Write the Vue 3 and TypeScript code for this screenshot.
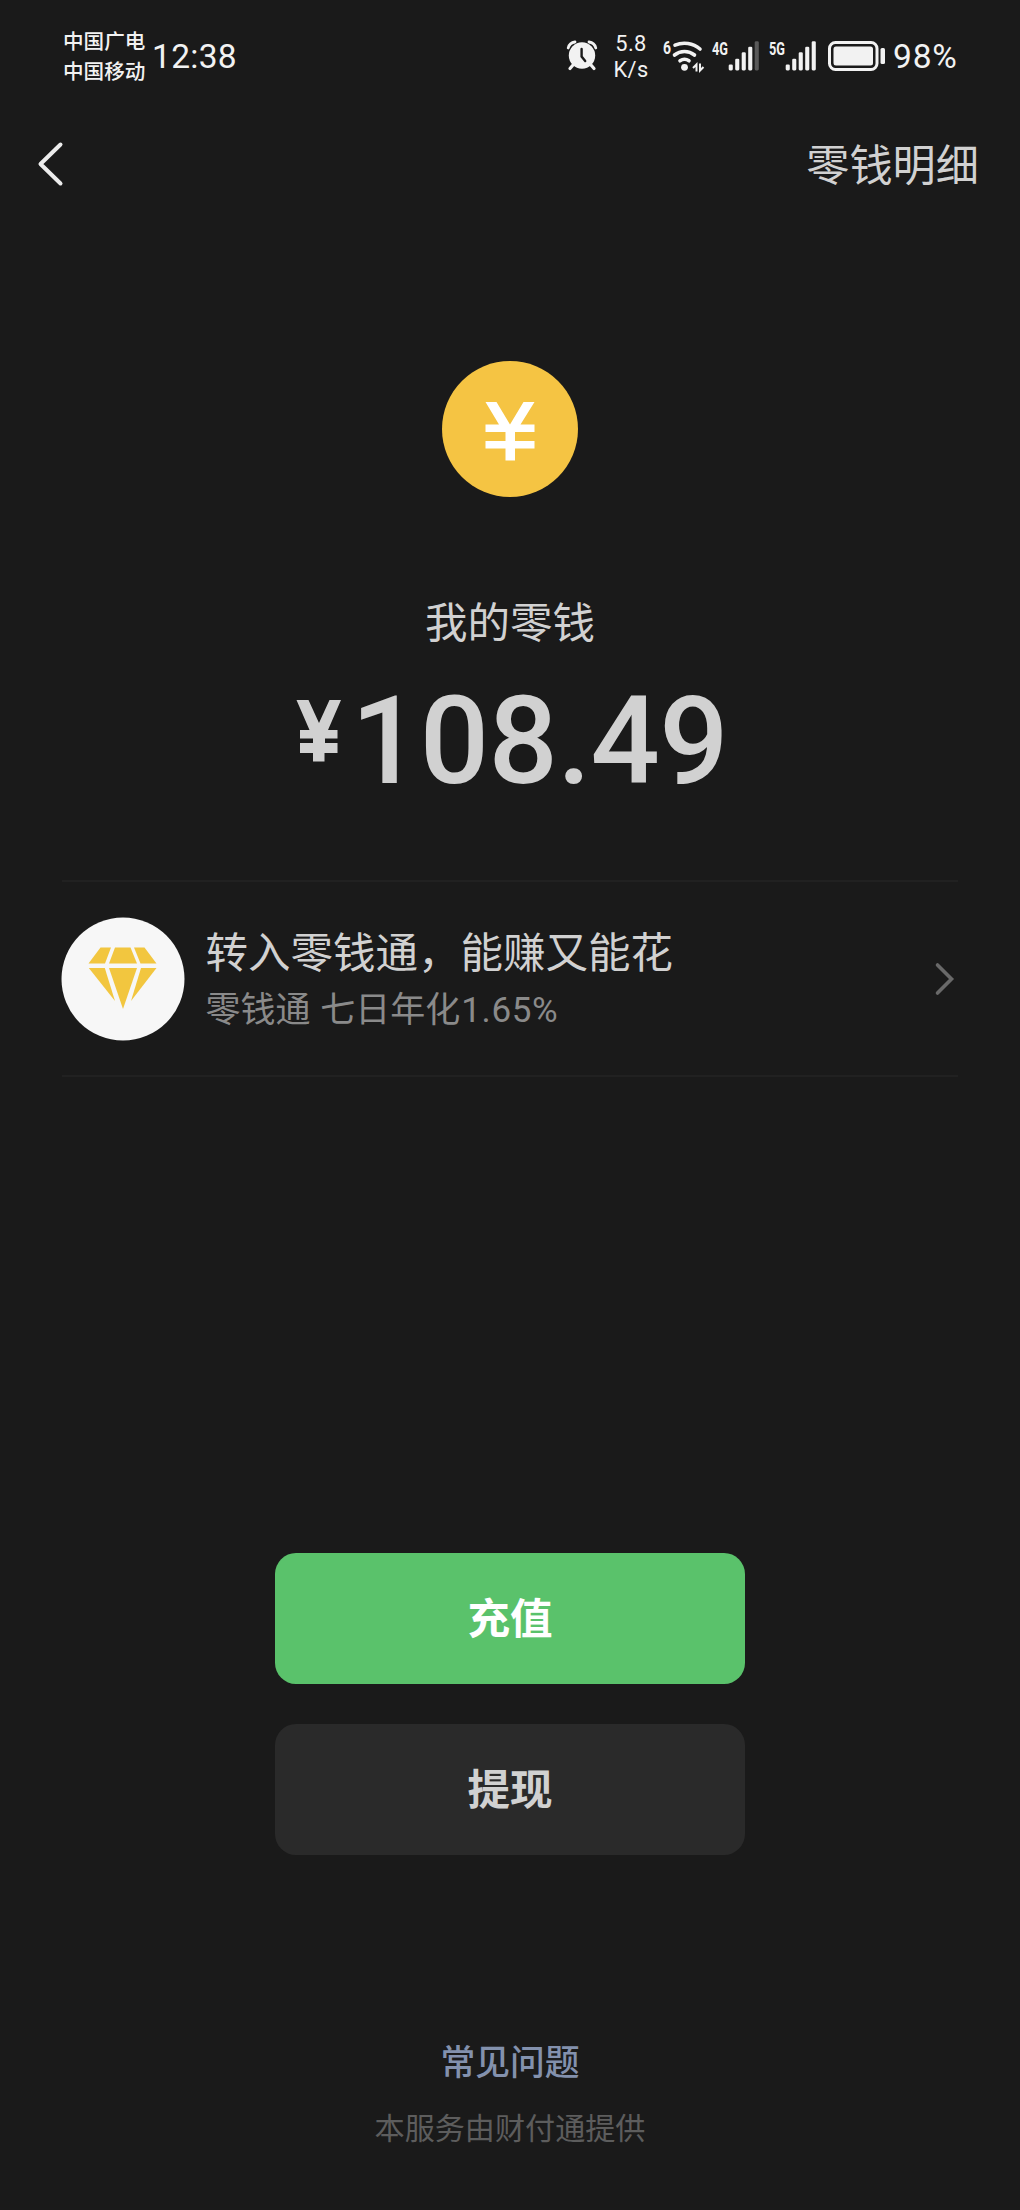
<script setup lang="ts">
interface Signal {
  label: string
  bars: number
}

const carriers: string[] = ['中国广电', '中国移动']
const signals: Signal[] = [
  { label: '4G', bars: 4 },
  { label: '5G', bars: 5 },
]
const barTops: number[] = [24.5, 18.7, 12.3, 6.7, 1.3]
const balance = '108.49'
</script>

<template>
  <div class="page">
    <header class="status">
      <div class="carriers">
        <span v-for="c in carriers" :key="c">{{ c }}</span>
      </div>
      <span class="time">12:38</span>
      <div class="spacer"></div>
      <svg class="alarm" width="32" height="32" viewBox="0 0 32 32">
        <path d="M2.200 8A8 8 0 0 1 9 2M29.800 8A8 8 0 0 0 23 2" fill="none" stroke="#f2f2f2" stroke-width="2.800" stroke-linecap="round" />
        <path d="M7 25l-3 3.500M25 25l3 3.500" stroke="#f2f2f2" stroke-width="3.200" stroke-linecap="round" />
        <circle cx="16" cy="15.500" r="13.200" fill="#f2f2f2" />
        <path d="M15.600 9v7.500l3.600 4.500" fill="none" stroke="#1a1a1a" stroke-width="2.400" stroke-linecap="round" />
      </svg>
      <div class="speed"><span>5.8</span><span>K/s</span></div>
      <svg class="wifi" width="44" height="34" viewBox="0 0 44 34">
        <text x="1" y="14.500" font-size="17.500" textLength="8" lengthAdjust="spacingAndGlyphs" class="tag">6</text>
        <g fill="none" stroke="#f2f2f2" stroke-width="3.600" stroke-linecap="round">
          <path d="M13 6.200A24 24 0 0 1 38 10" />
          <path d="M12.500 16A16 16 0 0 1 32.500 16" />
          <path d="M18 21.800A8 8 0 0 1 27 21.800" />
        </g>
        <circle cx="22.500" cy="28.300" r="3.400" fill="#f2f2f2" />
        <path d="M31 29l3.500-3.500v7M38 24.500v7l3.500-3.500" fill="none" stroke="#f2f2f2" stroke-width="2" />
      </svg>
      <svg v-for="s in signals" :key="s.label" class="signal" width="50" height="32" viewBox="0 0 50 32">
        <text x="1" y="14.500" font-size="17.500" textLength="16" lengthAdjust="spacingAndGlyphs" class="tag">{{ s.label }}</text>
        <rect
          v-for="(top, i) in barTops"
          :key="i"
          :x="17.7 + i * 6.5"
          :y="top"
          width="4.1"
          :height="30.4 - top"
          rx="1.3"
          :fill="i < s.bars ? '#f2f2f2' : '#5a5a5a'"
        />
      </svg>
      <svg class="battery" width="58" height="32" viewBox="0 0 58 32">
        <rect x="2.500" y="2.500" width="47.500" height="27" rx="6" fill="none" stroke="#f2f2f2" stroke-width="3" />
        <rect x="6.500" y="6.400" width="39.500" height="19.200" rx="2.500" fill="#f2f2f2" />
        <rect x="53.500" y="8" width="4.500" height="16" rx="1.500" fill="#f2f2f2" />
      </svg>
      <span class="percent">98%</span>
    </header>

    <nav class="nav">
      <svg class="back" width="30" height="48" viewBox="0 0 30 48">
        <path d="M24.500 4.500L4.500 24L24.500 43.500" fill="none" stroke="#ececec" stroke-width="4" stroke-linecap="round" stroke-linejoin="round" />
      </svg>
      <a class="detail">零钱明细</a>
    </nav>

    <main class="main">
      <svg class="coin" width="138" height="138" viewBox="0 0 138 138">
        <circle cx="69" cy="69" r="68" fill="#f5c443" />
        <path d="M44.500 42H55.500L69 64.500L82.500 42H93.500L79.500 64.500H93.500V72H74V81H93.500V88.500H74V100.500H64.500V88.500H44.500V81H64.500V72H44.500V64.500H58z" fill="#fff" />
      </svg>
      <div class="label">我的零钱</div>
      <div class="amount">
        <svg class="yen" width="46" height="64" viewBox="0 0 46 64">
          <path d="M.5 1H12.500L23 24L33.500 1H45L32 31H41.500V39.500H29V44H41.500V54H28.500V62.500H17V54H4V44H17V39.500H4V31H13.500z" fill="#d1d1d1" />
        </svg>
        <span class="digits">{{ balance }}</span>
      </div>

      <section class="promo">
        <svg width="124" height="124" viewBox="0 0 124 124">
          <circle cx="62" cy="62" r="61.500" fill="#f7f7f7" />
          <g fill="#f2c63f">
            <path d="M39.500 30.500h10.500L44 46.500H27.500z" />
            <path d="M54 30.500h15.500L76 46.500H48z" />
            <path d="M73 30.500h10.500L95.500 46.500H79.500z" />
            <path d="M27.800 51h16L54 84z" />
            <path d="M48 51h28L62 92z" />
            <path d="M80 51h15.500L70 84z" />
          </g>
        </svg>
        <div class="promo-text">
          <div class="promo-title">转入零钱通，能赚又能花</div>
          <div class="promo-sub">零钱通 七日年化<span class="rate">1.65%</span></div>
        </div>
        <svg class="chevron" width="24" height="38" viewBox="0 0 24 38">
          <path d="M5.500 5L19.500 19L5.500 33" fill="none" stroke="#696969" stroke-width="3.600" stroke-linecap="round" />
        </svg>
      </section>

      <div class="actions">
        <button class="btn primary">充值</button>
        <button class="btn secondary">提现</button>
      </div>
      <a class="faq">常见问题</a>
      <p class="provider">本服务由财付通提供</p>
    </main>
  </div>
</template>

<style>
body {
  background: #1a1a1a;
}
</style>

<style scoped>
.page {
  width: 1020px;
  height: 2210px;
  overflow: hidden;
  background: #1a1a1a;
  font-family: "Noto Sans CJK SC", sans-serif;
  color: #d1d1d1;
}
svg {
  flex: none;
  overflow: visible;
}
.status {
  display: flex;
  align-items: center;
  box-sizing: border-box;
  height: 112px;
  padding: 0 63px;
  color: #f2f2f2;
}
.carriers {
  display: flex;
  flex-direction: column;
  width: 89px;
  margin-top: -2px;
  font-size: 20.6px;
  font-weight: 500;
  line-height: 30px;
}
.time,
.percent {
  padding-top: 1px;
  font-family: Roboto, sans-serif;
  font-size: 33.5px;
  font-weight: 400;
  line-height: 40px;
  letter-spacing: 0.3px;
}
.percent {
  width: 64px;
  letter-spacing: 0.8px;
}
.spacer {
  flex: 1;
}
.speed {
  display: flex;
  flex-direction: column;
  align-items: center;
  width: 38px;
  margin: 2px 12px 0 14px;
  font-family: Roboto, sans-serif;
  font-size: 21.8px;
  line-height: 25.6px;
  letter-spacing: 0.4px;
}
.tag {
  font-family: Roboto, sans-serif;
  font-weight: 700;
  fill: #f2f2f2;
}
.wifi {
  margin-right: 5px;
}
.signal {
  margin-right: 7px;
}
.battery {
  margin: 0 8px 0 2px;
}
.nav {
  display: flex;
  align-items: center;
  justify-content: space-between;
  height: 104px;
  padding: 0 41px 0 36px;
}
.detail {
  padding-bottom: 5px;
  font-size: 43.2px;
  line-height: 60px;
}
.main {
  display: flex;
  flex-direction: column;
  align-items: center;
}
.coin {
  margin-top: 144px;
}
.label {
  margin-top: 92px;
  font-size: 42.5px;
  line-height: 60px;
}
.amount {
  display: flex;
  align-items: flex-start;
  width: 428px;
  height: 110px;
  margin-top: 46px;
}
.yen {
  margin: 3px 9px 0 0;
}
.digits {
  padding-top: 2px;
  font-family: Roboto, sans-serif;
  font-size: 122px;
  font-weight: 500;
  line-height: 88px;
  letter-spacing: -0.6px;
}
.promo {
  display: flex;
  align-items: center;
  box-sizing: border-box;
  width: 896px;
  height: 197px;
  margin-top: 74px;
  border-top: 2px solid #212121;
  border-bottom: 2px solid #212121;
}
.promo > svg:first-child {
  margin-left: -1.5px;
}
.promo-text {
  flex: 1;
  margin-left: 21px;
}
.promo-title {
  font-size: 42.5px;
  line-height: 60px;
}
.promo-sub {
  font-size: 35px;
  line-height: 54px;
  word-spacing: 2px;
  color: #8a8a8a;
}
.rate {
  margin-left: 1px;
  font-family: Roboto, sans-serif;
  font-weight: 400;
  letter-spacing: 0.6px;
}
.chevron {
  margin-right: 2px;
}
.actions {
  display: flex;
  flex-direction: column;
  gap: 40px;
  margin-top: 476px;
}
.btn {
  width: 470px;
  height: 131px;
  padding: 0 0 5px;
  border: 0;
  border-radius: 21px;
  font-family: inherit;
  font-size: 42.5px;
  font-weight: 700;
  line-height: 60px;
}
.primary {
  background: #5ac26b;
  color: #fff;
}
.secondary {
  background: #2a2a2a;
  color: #d1d1d1;
}
.faq {
  margin-top: 180px;
  font-size: 34.8px;
  font-weight: 500;
  line-height: 50px;
  color: #8391ad;
}
.provider {
  margin: 19px 0 0;
  font-size: 30.1px;
  line-height: 44px;
  color: #5d5d5d;
}
</style>
